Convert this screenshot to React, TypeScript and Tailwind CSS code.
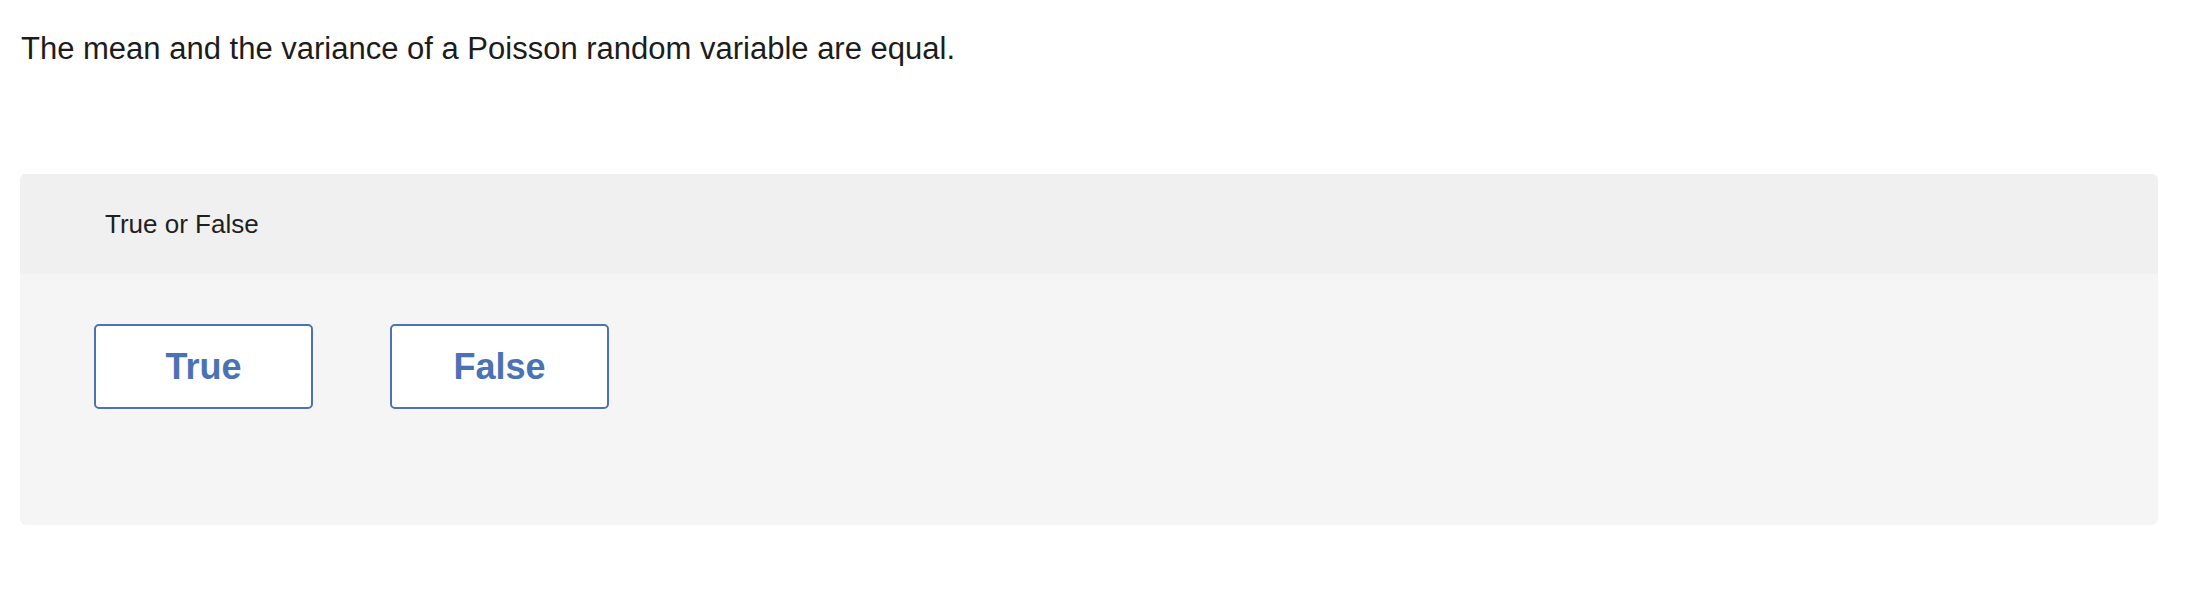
import React, { useState } from "react";

export default function App() {
  const [answer, setAnswer] = useState<string | null>(null);

  const options = ["True", "False"];

  return (
    <div className="min-h-[614px] bg-white font-['Liberation_Sans',Arial,sans-serif]">
      <p className="pl-[21px] pt-[31px] text-[31px] leading-[36px] text-[#1c1c1c]">
        The mean and the variance of a Poisson random variable are equal.
      </p>

      <div className="ml-[20px] mr-[28px] mt-[107px] overflow-hidden rounded-[6px] bg-[#f5f5f5]">
        {/* Question type header */}
        <div className="flex h-[100px] items-center bg-[#f0f0f0] pl-[85px]">
          <span className="text-[26px] leading-[30px] text-[#1f1f1f]">True or False</span>
        </div>

        {/* Answer choices */}
        <div className="flex h-[251px] items-start gap-[77px] pl-[74px] pt-[50px]">
          {options.map((opt) => (
            <button
              key={opt}
              onClick={() => setAnswer(opt)}
              className={`flex h-[85px] w-[219px] items-center justify-center rounded-[5px] border-2 border-[#4a73b5] text-[36px] font-bold leading-none ${
                answer === opt ? "bg-[#4a73b5] text-white" : "bg-white text-[#4a73b5]"
              }`}
            >
              {opt}
            </button>
          ))}
        </div>
      </div>
    </div>
  );
}
